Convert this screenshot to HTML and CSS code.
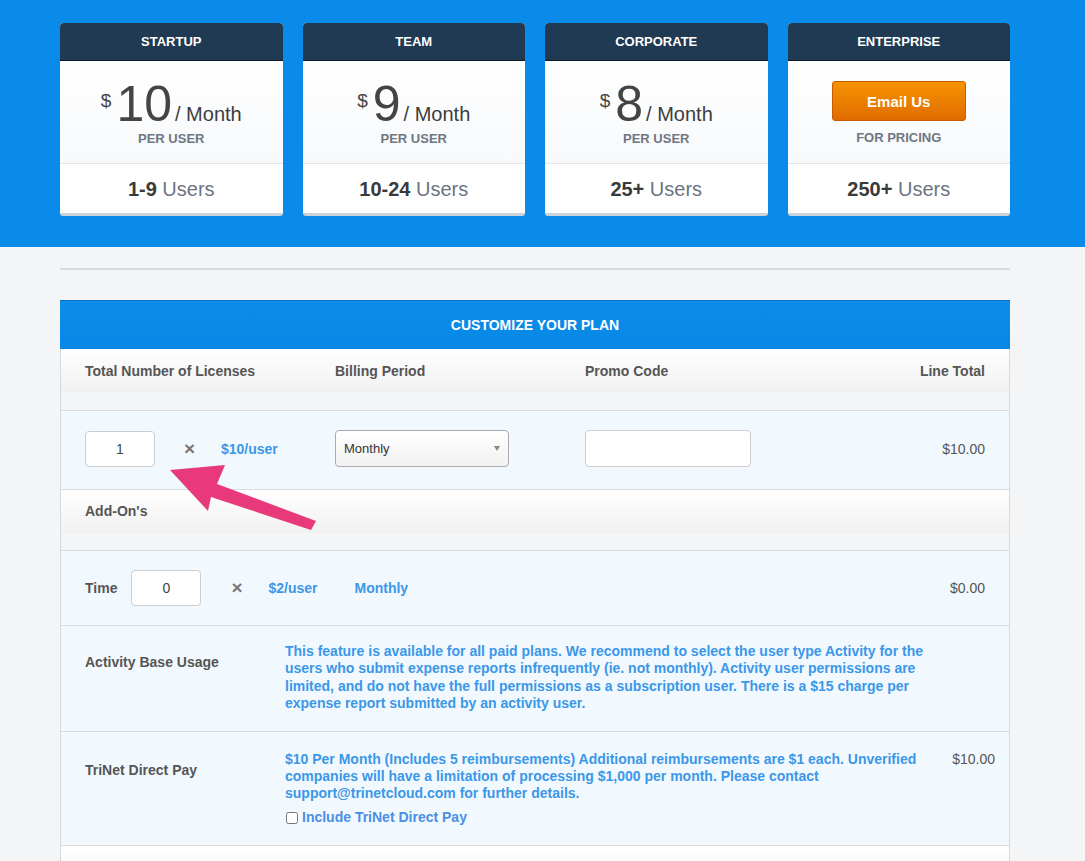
FILE: index.html
```html
<!DOCTYPE html>
<html>
<head>
<meta charset="utf-8">
<link rel="stylesheet" href="styles.css">
</head>
<body>
<div class="page">
  <div class="band">
    <div class="cards">
      <div class="card">
        <div class="card-head">STARTUP</div>
        <div class="card-body">
          <div class="price"><span class="cur">$</span><span class="amt">10</span><span class="per">/ Month</span></div>
          <div class="note">PER USER</div>
        </div>
        <div class="card-foot"><b>1-9</b> Users</div>
      </div>
      <div class="card">
        <div class="card-head">TEAM</div>
        <div class="card-body">
          <div class="price"><span class="cur">$</span><span class="amt">9</span><span class="per">/ Month</span></div>
          <div class="note">PER USER</div>
        </div>
        <div class="card-foot"><b>10-24</b> Users</div>
      </div>
      <div class="card">
        <div class="card-head">CORPORATE</div>
        <div class="card-body">
          <div class="price"><span class="cur">$</span><span class="amt">8</span><span class="per">/ Month</span></div>
          <div class="note">PER USER</div>
        </div>
        <div class="card-foot"><b>25+</b> Users</div>
      </div>
      <div class="card">
        <div class="card-head">ENTERPRISE</div>
        <div class="card-body">
          <a class="email-btn">Email Us</a>
          <div class="note note-btn">FOR PRICING</div>
        </div>
        <div class="card-foot"><b>250+</b> Users</div>
      </div>
    </div>
  </div>

  <div class="content">
    <div class="rule"></div>
    <div class="panel">
      <div class="panel-head">CUSTOMIZE YOUR PLAN</div>
      <div class="colhead grid4">
        <div>Total Number of Licenses</div>
        <div>Billing Period</div>
        <div>Promo Code</div>
        <div class="right">Line Total</div>
      </div>
      <div class="row row-main grid4">
        <div class="cell">
          <input class="qty" type="text" value="1">
          <span class="times">×</span>
          <span class="blue">$10/user</span>
        </div>
        <div class="cell">
          <div class="select"><span>Monthly</span><span class="caret"></span></div>
        </div>
        <div class="cell">
          <input class="promo" type="text" value="">
        </div>
        <div class="cell right total">$10.00</div>
      </div>
      <div class="colhead section">
        <div>Add-On's</div>
      </div>
      <div class="row row-time">
        <span class="label">Time</span>
        <input class="qty qty-time" type="text" value="0">
        <span class="times times-time">×</span>
        <span class="blue rate-time">$2/user</span>
        <span class="blue monthly">Monthly</span>
        <span class="total push">$0.00</span>
      </div>
      <div class="row row-desc">
        <div class="label desc-label">Activity Base Usage</div>
        <div class="desc blue">This feature is available for all paid plans. We recommend to select the user type Activity for the users who submit expense reports infrequently (ie. not monthly). Activity user permissions are limited, and do not have the full permissions as a subscription user. There is a $15 charge per expense report submitted by an activity user.</div>
        <div></div>
      </div>
      <div class="row row-desc row-trinet">
        <div class="label desc-label">TriNet Direct Pay</div>
        <div class="desc blue">$10 Per Month (Includes 5 reimbursements) Additional reimbursements are $1 each. Unverified companies will have a limitation of processing $1,000 per month. Please contact support@trinetcloud.com for further details.
          <label class="check"><input type="checkbox"><span>Include TriNet Direct Pay</span></label>
        </div>
        <div class="total trinet-total">$10.00</div>
      </div>
      <div class="colhead tail"></div>
    </div>
  </div>

  <svg class="arrow" width="1085" height="861" viewBox="0 0 1085 861">
    <polygon fill="#e8397a" points="170,470 225,465 217,484 316,521 311,530 211,497 208,511"/>
  </svg>
</div>
</body>
</html>
```

FILE: styles.css
```css
* { box-sizing: border-box; }
html, body { margin: 0; padding: 0; }
body {
  background: #f4f5f7;
  font-family: "Liberation Sans", Arial, Helvetica, sans-serif;
  color: #555;
  width: 1085px;
  height: 861px;
  overflow: hidden;
}
.page { position: relative; }

.band {
  background: #0a8ae9;
  height: 247px;
  padding-top: 23px;
}
.cards {
  width: 950px;
  margin-left: 60px;
  display: flex;
  gap: 20px;
}
.card {
  flex: 1;
  background: #fff;
  border-radius: 4px 4px 3px 3px;
  overflow: hidden;
  border-bottom: 3px solid #cdd2d8;
}
.card-head {
  height: 38px;
  background: #1f3a52;
  border-bottom: 1px solid #0c1a26;
  color: #fff;
  font-weight: bold;
  font-size: 13px;
  text-align: center;
  line-height: 37px;
}
.card-body {
  height: 102px;
  padding-top: 19px;
  background: linear-gradient(#ffffff, #f7f9fb);
  text-align: center;
}
.price {
  height: 52px;
  line-height: 52px;
  color: #444;
  white-space: nowrap;
}
.cur {
  font-size: 19px;
  position: relative;
  top: -16px;
  margin-right: 5px;
}
.amt {
  font-size: 50px;
  position: relative;
  top: -2px;
}
.per {
  font-size: 20px;
  margin-left: 3px;
  color: #3d3d3d;
  position: relative;
  top: -2px;
}
.note {
  margin-top: 0;
  font-size: 13px;
  line-height: 14px;
  font-weight: bold;
  color: #6e7782;
}
.note-btn { margin-top: 10px; }
.email-btn {
  display: block;
  width: 134px;
  height: 40px;
  margin: 1px auto 0;
  border: 1px solid #c55d00;
  border-radius: 3px;
  background: linear-gradient(#f69300, #e06c00);
  color: #fff;
  font-weight: bold;
  font-size: 15px;
  line-height: 39px;
  text-align: center;
}
.card-foot {
  height: 50px;
  border-top: 1px solid #e1e4e8;
  text-align: center;
  font-size: 20px;
  line-height: 51px;
  color: #6b7480;
}
.card-foot b { color: #3a3a3a; }

.content {
  width: 950px;
  margin-left: 60px;
  padding-top: 21px;
}
.rule {
  height: 2px;
  background: #d9dbde;
}
.panel {
  margin-top: 30px;
  border-left: 1px solid #d6d9dd;
  border-right: 1px solid #d6d9dd;
}
.panel-head {
  height: 49px;
  margin: 0 -1px;
  background: linear-gradient(#0b8de9, #0888e6);
  border-top: 1px solid #0a6fbf;
  color: #fff;
  font-weight: bold;
  font-size: 14px;
  text-align: center;
  line-height: 48px;
}
.colhead {
  height: 62px;
  padding: 0 24px;
  border-bottom: 1px solid #d9dcdf;
  background: linear-gradient(#ffffff 0, #f1f1f1 43px, #f4f5f6 43px, #f4f5f6 100%);
  font-size: 14px;
  font-weight: bold;
  line-height: 44px;
  color: #555;
}
.colhead.section { height: 61px; line-height: 43px; }
.colhead.tail { border-bottom: none; height: 30px; }
.grid4 {
  display: grid;
  grid-template-columns: 250px 250px 1fr auto;
}
.right { text-align: right; }
.row {
  background: #f2f9fe;
  border-bottom: 1px solid #d9dcdf;
  padding: 0 24px;
  font-size: 14px;
}
.row-main {
  height: 79px;
  padding-top: 19px;
}
.cell {
  display: flex;
  align-items: center;
  height: 37px;
}
.cell.right { justify-content: flex-end; }
input.qty, input.promo {
  height: 36px;
  border: 1px solid #cbcdd0;
  border-radius: 4px;
  background: #fff;
  font-family: "Liberation Sans", Arial, sans-serif;
  font-size: 14px;
  color: #444;
  text-align: center;
  padding: 0;
  outline: none;
}
input.promo { height: 37px; }
input.qty { width: 70px; }
input.promo { width: 166px; }
.times {
  margin-left: 29px;
  font-size: 19px;
  font-weight: bold;
  color: #777;
  width: 12px;
}
.blue {
  color: #3b97e8;
  font-weight: bold;
}
.times + .blue { margin-left: 25px; }
.times + .rate-time { margin-left: 25px; }
.select {
  width: 174px;
  height: 37px;
  border: 1px solid #a9abae;
  border-radius: 4px;
  background: linear-gradient(#ffffff, #f1f1f1);
  display: flex;
  align-items: center;
  justify-content: space-between;
  padding: 0 8px 0 8px;
  font-size: 13px;
  color: #333;
}
.caret {
  width: 0;
  height: 0;
  border-left: 3.5px solid transparent;
  border-right: 3.5px solid transparent;
  border-top: 5px solid #888;
}
.total {
  color: #555;
  font-weight: normal;
  font-size: 14px;
}
.row-time {
  height: 75px;
  display: flex;
  align-items: center;
  padding-bottom: 1px;
}
.label {
  font-weight: bold;
  color: #555;
}
.qty-time { margin-left: 14px; }
.times-time { margin-left: 30px; }
.monthly { margin-left: 37px; }
.push { margin-left: auto; }
.row-desc {
  display: grid;
  grid-template-columns: 200px 645px 1fr;
  padding: 17px 14px 18px 24px;
}
.desc {
  font-size: 14px;
  line-height: 17.4px;
}
.desc-label {
  padding-top: 11px;
  line-height: 17.4px;
}
.row-trinet { padding-top: 19px; padding-bottom: 19px; }
.trinet-total {
  text-align: right;
  line-height: 17.4px;
}
.check {
  display: flex;
  align-items: center;
  margin-top: 6px;
  color: #4a8ee6;
}
.check input {
  margin: 0 4px 0 1px;
  width: 12px;
  height: 12px;
}
.arrow {
  position: absolute;
  left: 0;
  top: 0;
  pointer-events: none;
}
```
